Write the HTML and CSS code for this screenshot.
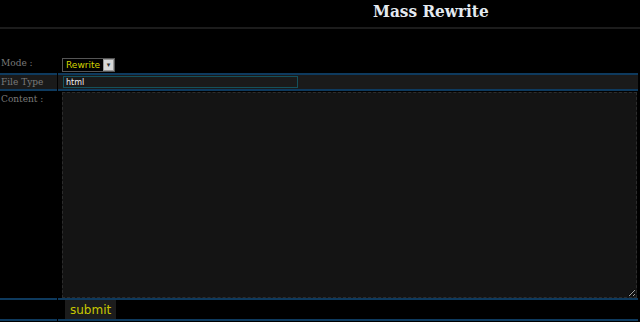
FILE: index.html
```html
<!DOCTYPE html>
<html lang="en">
<head>
  <meta charset="UTF-8" />
  <title>Mass Rewrite</title>
  <link rel="stylesheet" href="styles.css">
</head>
<body>
  <div class="header">
    <h1>Mass Rewrite</h1>
  </div>

  <form class="rewrite-form">
    <table class="form-table">
      <tr class="row-plain">
        <td class="label">Mode :</td>
        <td class="field">
          <span class="select">
            <span class="select-value">Rewrite</span>
            <span class="select-arrow">&#9662;</span>
          </span>
        </td>
      </tr>
      <tr class="row-hl">
        <td class="label">File Type</td>
        <td class="field"><input type="text" class="text-input" value="html"></td>
      </tr>
      <tr class="row-plain">
        <td class="label label-top">Content :</td>
        <td class="field"><textarea class="content-area"></textarea></td>
      </tr>
      <tr class="row-line">
        <td class="label"></td>
        <td class="field"><button type="button" class="btn-submit">submit</button></td>
      </tr>
    </table>
  </form>
</body>
</html>
```

FILE: styles.css
```css
* {
  box-sizing: border-box;
}

body {
  margin: 0;
  background-color: #000;
  color: #888;
  font-family: 'DejaVu Serif', serif;
  overflow: hidden;
}

.header {
  height: 29px;
  border-bottom: 2px solid #1c1c1c;
  padding-left: 373px;
}

.header h1 {
  margin: 0;
  padding-top: 1px;
  font-family: 'DejaVu Serif Condensed', 'DejaVu Serif', serif;
  font-stretch: condensed;
  font-size: 17px;
  font-weight: bold;
  color: #e4eaf0;
  line-height: 20px;
}

.rewrite-form {
  margin-top: 24px;
}

.form-table {
  width: 100%;
  border-collapse: separate;
  border-spacing: 1px 0;
  margin-left: -1px;
}

.form-table td {
  padding: 0;
  vertical-align: middle;
}

.label {
  width: 57px;
  font-size: 9px;
  color: #7a7a7a;
  padding-left: 1px !important;
  white-space: nowrap;
}

.label-top {
  vertical-align: top !important;
  padding-top: 3px !important;
}

.field {
  padding-left: 4px !important;
}

.row-plain td {
  padding-top: 0;
  padding-bottom: 0;
}

.row-hl td {
  background-color: #1a1a1a;
  border-top: 2px solid #0e3a5e;
  border-bottom: 2px solid #0e3a5e;
  height: 18px;
}

.row-line td {
  border-top: 2px solid #0e3a5e;
  border-bottom: 2px solid #0e3a5e;
  height: 23px;
}

.select {
  display: inline-flex;
  align-items: center;
  height: 14px;
  border: 1px solid #555;
  background-color: #000;
  margin-bottom: 1px;
}

.select-value {
  font-family: 'DejaVu Sans', sans-serif;
  font-size: 9px;
  color: #d4d400;
  padding: 0 3px 0 3px;
}

.select-arrow {
  width: 11px;
  height: 12px;
  background-color: #d8d8d8;
  border: 1px solid #999;
  color: #333;
  font-size: 7px;
  line-height: 10px;
  text-align: center;
}

.text-input {
  display: block;
  width: 235px;
  height: 12px;
  margin: 0 0 0 1px;
  padding: 0 2px;
  background-color: #1a1a1a;
  border: 1px solid #14515c;
  color: #f0f0f0;
  font-family: 'DejaVu Sans', sans-serif;
  font-size: 8px;
}

.content-area {
  display: block;
  width: 575px;
  height: 206px;
  margin: 1px 0 0 0;
  background-color: #141414;
  border: 1px dashed #2c2c2c;
  resize: both;
}

.btn-submit {
  display: block;
  margin-left: 3px;
  height: 19px;
  padding: 0 5px;
  border: none;
  background-color: #1c1c1c;
  color: #c8c800;
  font-family: 'DejaVu Sans', sans-serif;
  font-size: 12px;
}
```
